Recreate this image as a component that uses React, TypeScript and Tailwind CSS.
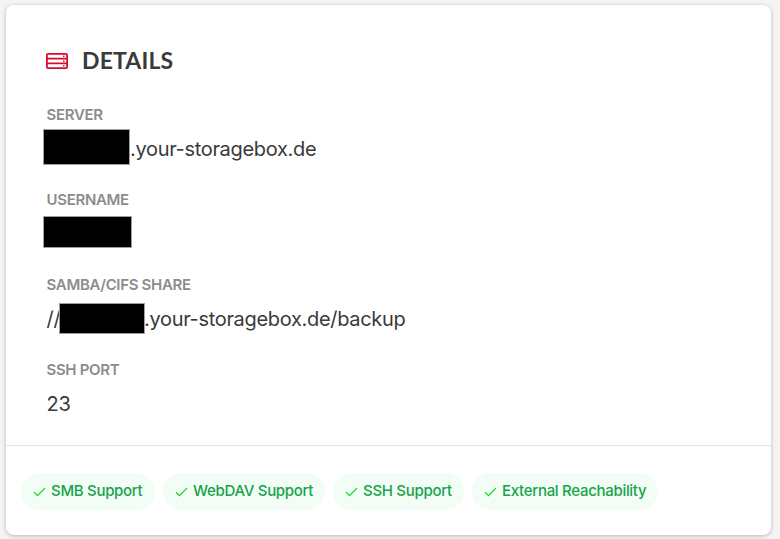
import type { ReactNode } from "react";

type DetailFieldProps = {
  label: string;
  children: ReactNode;
};

const FEATURES = [
  { label: "SMB Support", className: "w-[134px]" },
  { label: "WebDAV Support", className: "w-[162px]" },
  { label: "SSH Support", className: "w-[131px]" },
  { label: "External Reachability", className: "w-[186px]" },
];

export default function App() {
  return (
    <main className="h-[539px] w-[780px] overflow-hidden bg-[#f4f4f4] pt-[5px] pl-1.5 font-['Inter',sans-serif]">
      <section className="flex h-[530px] w-[765px] flex-col rounded-lg bg-white shadow-[0_1px_4px_rgba(0,0,0,0.25)]">
        <div className="h-[440px] pt-[41px] pl-10">
          <h2 className="flex h-[30px] items-center text-[#383a3c]">
            <ServerIcon />
            <span className="-mt-0.5 ml-3.5 font-['Lato',sans-serif] text-[23px] leading-[30px] font-bold tracking-[0.15px]">
              DETAILS
            </span>
          </h2>
          <dl className="mt-[29px]">
            <DetailField label="SERVER">
              <span className="-mt-1 -ml-[3px] h-9 w-[87px] border border-[#a0a0a0] bg-black" />
              <span>.your-storagebox.de</span>
            </DetailField>
            <DetailField label="USERNAME">
              <span className="-mt-1 -ml-[3px] h-8 w-[89px] border border-[#a0a0a0] bg-black" />
            </DetailField>
            <DetailField label="SAMBA/CIFS SHARE">
              <span className="w-[13px] pl-[0.5px]">//</span>
              <span className="-mt-px h-[31px] w-[86px] border border-[#a0a0a0] bg-black" />
              <span className="-ml-px">.your-storagebox.de/backup</span>
            </DetailField>
            <DetailField label="SSH PORT">
              <span className="pl-[0.5px]">23</span>
            </DetailField>
          </dl>
        </div>
        <ul className="flex gap-2 border-t border-[#e4e4e4] pt-[27px] pl-[15px]">
          {FEATURES.map((feature) => (
            <li
              key={feature.label}
              className={`flex h-[37px] shrink-0 items-center rounded-full bg-[#f2fdf5] pl-[11.5px] text-[15px] font-medium whitespace-nowrap text-[#16a34a] ${feature.className}`}
            >
              <CheckIcon />
              <span className="ml-[5.5px] tracking-[-0.3px]">{feature.label}</span>
            </li>
          ))}
        </ul>
      </section>
    </main>
  );
}

function DetailField({ label, children }: DetailFieldProps) {
  return (
    <div className="h-[85px]">
      <dt className="h-5 pl-[0.5px] text-[15px] leading-5 font-semibold tracking-[-0.32px] text-[#8c8c8c]">
        {label}
      </dt>
      <dd className="mt-[9px] flex h-[30px] items-center text-xl tracking-[-0.32px] whitespace-nowrap text-[#383a3c]">
        {children}
      </dd>
    </div>
  );
}

function ServerIcon() {
  return (
    <svg width="22" height="16" viewBox="0 0 22 16" fill="none" stroke="#d50c2d" aria-hidden="true">
      <rect x="0.9" y="0.9" width="20.2" height="14.2" rx="1.2" strokeWidth="1.8" />
      <path d="M1 5.6h20M1 10.4h20" strokeWidth="1.8" />
      <path d="M17 3.25h1.5M17 8h1.5M17 12.75h1.5" strokeWidth="1.5" />
    </svg>
  );
}

function CheckIcon() {
  return (
    <svg width="13" height="10" viewBox="0 0 13 10" fill="none" stroke="#10d020" aria-hidden="true">
      <path d="m1 5.2 3.5 3.5L12 1.2" strokeWidth="1.2" />
    </svg>
  );
}
